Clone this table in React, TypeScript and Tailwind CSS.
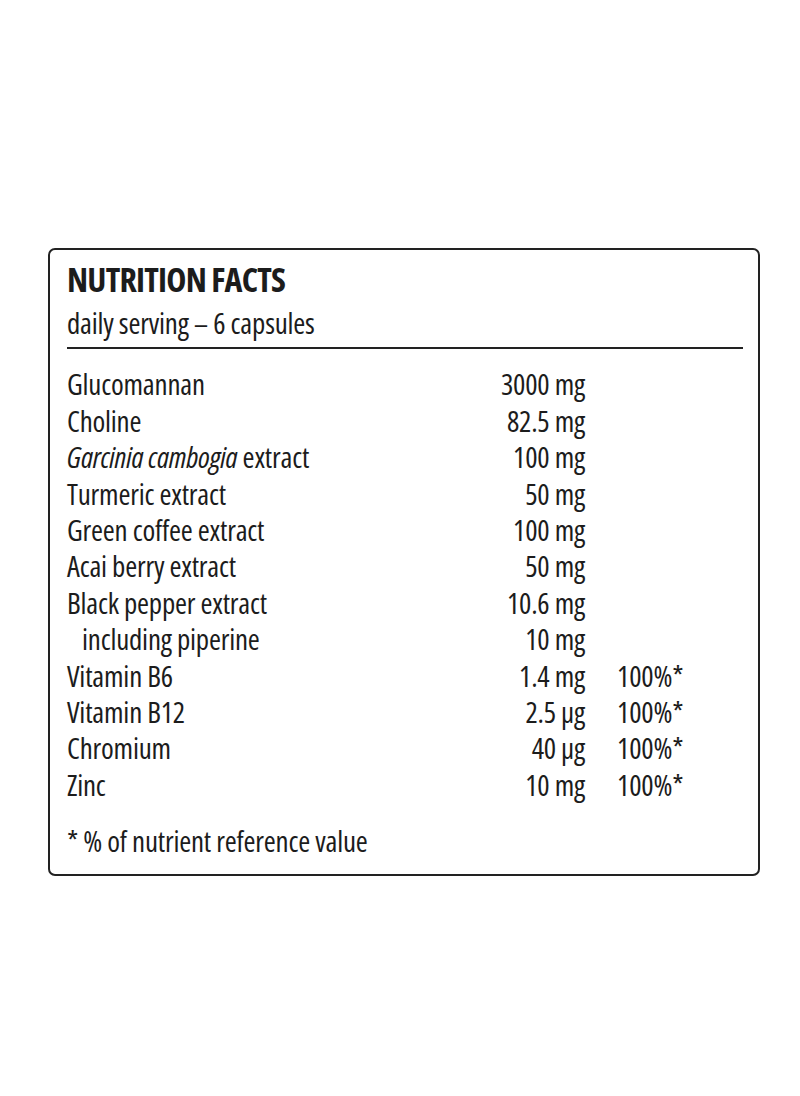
const rows: { name: React.ReactNode; value: string; pct?: string; indent?: boolean }[] = [
  { name: "Glucomannan", value: "3000 mg" },
  { name: "Choline", value: "82.5 mg" },
  {
    name: (
      <>
        <i>Garcinia cambogia</i> extract
      </>
    ),
    value: "100 mg",
  },
  { name: "Turmeric extract", value: "50 mg" },
  { name: "Green coffee extract", value: "100 mg" },
  { name: "Acai berry extract", value: "50 mg" },
  { name: "Black pepper extract", value: "10.6 mg" },
  { name: "including piperine", value: "10 mg", indent: true },
  { name: "Vitamin B6", value: "1.4 mg", pct: "100%*" },
  { name: "Vitamin B12", value: "2.5 µg", pct: "100%*" },
  { name: "Chromium", value: "40 µg", pct: "100%*" },
  { name: "Zinc", value: "10 mg", pct: "100%*" },
];

export default function App() {
  return (
    <div className="min-h-[1096px] w-[800px] bg-white pt-[248px] font-['Open_Sans',sans-serif] text-[#1c1c1c] font-stretch-condensed">
      <div className="ml-[48px] w-[712px] rounded-[7px] border-2 border-[#222] pb-[14px] pl-[17px] pr-[15px] pt-[12px]">
        <div className="text-[34px] font-bold leading-[34px] tracking-[-0.8px]">NUTRITION FACTS</div>
        <div className="mt-[9px] text-[29px] font-[450] leading-[36.4px] tracking-[-0.2px]">daily serving – 6 capsules</div>
        <div className="mt-[6px] h-[2px] bg-[#222]" />
        <div className="mt-[17px] grid grid-cols-[400px_118px_1fr] text-[29px] font-[450] leading-[36.4px] tracking-[-0.2px]">
          {rows.map((r, i) => (
            <div key={i} className="contents">
              <div className={r.indent ? "pl-[15px]" : ""}>{r.name}</div>
              <div className="text-right">{r.value}</div>
              <div className="pl-[32px]">{r.pct ?? ""}</div>
            </div>
          ))}
        </div>
        <div className="mt-[20px] text-[29px] font-[450] leading-[36.4px] tracking-[-0.2px]">* % of nutrient reference value</div>
      </div>
    </div>
  );
}
